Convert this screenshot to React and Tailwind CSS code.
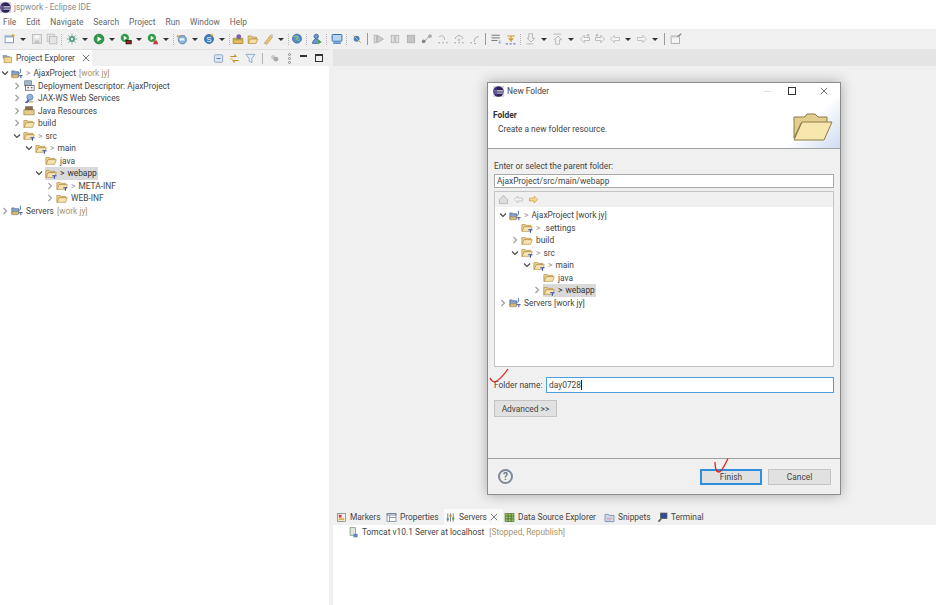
import React from "react";

const Eclipse = ({ className = "w-[11px] h-[11px]" }) => (
  <svg viewBox="0 0 16 16" className={className}>
    <rect x="0" y="0" width="16" height="16" fill="#d8d4e0" />
    <circle cx="8" cy="8" r="7.5" fill="#2c2255" />
    <path d="M1.5 6.6h13M1 8.6h14M1.7 10.6h12.6" stroke="#fff" strokeWidth="1" />
    <path d="M6 .8a7.5 7.5 0 0 0 0 14.4" fill="#473788" opacity=".6" />
  </svg>
);

const Chevron = ({ open }) => (
  <svg viewBox="0 0 8 8" className="w-[8px] h-[8px] shrink-0">
    {open ? (
      <path d="M1 2.5 4 5.5 7 2.5" fill="none" stroke="#444" strokeWidth="1.1" />
    ) : (
      <path d="M2.5 1 5.5 4 2.5 7" fill="none" stroke="#9a9a9a" strokeWidth="1.1" />
    )}
  </svg>
);

const Folder = ({ git }) => (
  <svg viewBox="0 0 14 12" className="w-[12px] h-[11px] shrink-0">
    <path d="M1 2.5h4l1 1h5.5v1.5H4L1.5 10.5H1z" fill="#e9cf94" stroke="#b48f45" strokeWidth=".8" />
    <path d="M3.6 5h9.6l-2 5.5H1.4z" fill="#f6e3b0" stroke="#b48f45" strokeWidth=".8" />
    {git && <path d="M8.5 8.5h5M11 8.5v3.5" stroke="#2f4fb5" strokeWidth="1.2" />}
  </svg>
);

const Project = () => (
  <svg viewBox="0 0 14 12" className="w-[12px] h-[11px] shrink-0">
    <path d="M1 3h3l1 1h4v6H1z" fill="#8aa3cc" stroke="#475f8e" strokeWidth=".8" />
    <path d="M1.500 7.500h7.500l-1 3.500H1z" fill="#d9bd78" stroke="#8c7238" strokeWidth=".5" />
    <path d="M11 .5v4c0 1.500-1.500 1.500-2 .8" stroke="#3a66b8" strokeWidth="1" fill="none" />
    <path d="M9.500 8.500h4M11.500 8.500v3" stroke="#2f4fb5" strokeWidth="1.100" />
  </svg>
);

const Descriptor = () => (
  <svg viewBox="0 0 14 12" className="w-[12px] h-[11px] shrink-0">
    <rect x="2" y="0.5" width="8" height="6" fill="#9fb8c9" stroke="#56707f" strokeWidth=".7" />
    <rect x="3" y="6" width="10" height="5.5" fill="#fff" stroke="#4a4a4a" strokeWidth=".8" />
    <path d="M5 8.5h2M9 8.5h2" stroke="#333" strokeWidth="1.2" />
  </svg>
);

const WebService = () => (
  <svg viewBox="0 0 14 12" className="w-[12px] h-[11px] shrink-0">
    <circle cx="8" cy="4.5" r="3.6" fill="#8fb2dc" stroke="#466f9f" strokeWidth=".7" />
    <path d="M2 11 6 7l2 2-3 2.5z" fill="#4b6fa8" />
    <path d="M8 9h4v2H7z" fill="#d0ba7a" />
  </svg>
);

const JavaRes = () => (
  <svg viewBox="0 0 14 12" className="w-[12px] h-[11px] shrink-0">
    <path d="M1 5h12v6H1z" fill="#e5cc8e" stroke="#9c7a38" strokeWidth=".8" />
    <path d="M3 1.5h8v3.5H3z" fill="#8d6e4f" stroke="#5a4632" strokeWidth=".7" />
  </svg>
);

const rowIcons = {
  project: <Project />,
  desc: <Descriptor />,
  ws: <WebService />,
  java: <JavaRes />,
  folder: <Folder />,
  git: <Folder git />,
};

function TreeRow({ depth, open, leaf, icon, label, prefix, tag, selected }) {
  const indent = ["w-0", "w-[12px]", "w-[24px]", "w-[34px]", "w-[45px]"][depth];
  return (
    <div className="flex items-center h-[12.5px] whitespace-nowrap">
      <span className={`${indent} shrink-0`} />
      <span className="w-[8px] ml-px mr-[2px] shrink-0">{leaf ? null : <Chevron open={open} />}</span>
      <span className={`flex items-center h-[12.5px] pr-px ${selected ? "bg-[#d9d9d9]" : ""}`}>
        {rowIcons[icon]}
        {prefix && <span className={`ml-[3px] ${selected ? "text-[#333]" : "text-[#999]"}`}>&gt;</span>}
        <span className={`ml-[3px] ${selected ? "text-[#333]" : "text-[#444]"}`}>{label}</span>
        {tag && <span className="ml-[3px] text-[#a8946b]">{tag}</span>}
      </span>
    </div>
  );
}

const mainTree = [
  { depth: 0, open: true, icon: "project", prefix: true, label: "AjaxProject", tag: "[work jy]" },
  { depth: 1, icon: "desc", label: "Deployment Descriptor: AjaxProject" },
  { depth: 1, icon: "ws", label: "JAX-WS Web Services" },
  { depth: 1, icon: "java", label: "Java Resources" },
  { depth: 1, icon: "folder", label: "build" },
  { depth: 1, open: true, icon: "git", prefix: true, label: "src" },
  { depth: 2, open: true, icon: "git", prefix: true, label: "main" },
  { depth: 3, leaf: true, icon: "folder", label: "java" },
  { depth: 3, open: true, icon: "git", prefix: true, label: "webapp", selected: true },
  { depth: 4, icon: "git", prefix: true, label: "META-INF" },
  { depth: 4, icon: "folder", label: "WEB-INF" },
  { depth: 0, icon: "project", label: "Servers", tag: "[work jy]" },
];

const dialogTree = [
  { depth: 0, open: true, icon: "project", prefix: true, label: "AjaxProject [work jy]" },
  { depth: 1, leaf: true, icon: "git", prefix: true, label: ".settings" },
  { depth: 1, icon: "folder", label: "build" },
  { depth: 1, open: true, icon: "git", prefix: true, label: "src" },
  { depth: 2, open: true, icon: "git", prefix: true, label: "main" },
  { depth: 3, leaf: true, icon: "folder", label: "java" },
  { depth: 3, icon: "git", prefix: true, label: "webapp", selected: true },
  { depth: 0, icon: "project", label: "Servers [work jy]" },
];

// toolbar glyphs, drawn on a 16x16 grid
const g = {
  newWin: <><rect x="1.5" y="4" width="11" height="9" fill="#fff" stroke="#5b7fa8" /><path d="M1.5 4h11v2h-11z" fill="#8fb0d6" /><path d="M12 1v5M9.5 3.5h5" stroke="#d8a62e" strokeWidth="1.3" /></>,
  save: <><rect x="2" y="2" width="12" height="12" fill="#e4e4e4" stroke="#b4b4b4" /><rect x="5" y="3" width="6" height="4" fill="#f8f8f8" /><rect x="5" y="10" width="6" height="4" fill="#c4c4c4" /></>,
  saveAll: <><rect x="1.5" y="1.5" width="10" height="10" fill="#e4e4e4" stroke="#bbb" /><rect x="4.5" y="4.5" width="10" height="10" fill="#e4e4e4" stroke="#b4b4b4" /></>,
  debug: <><circle cx="8" cy="8" r="4" fill="#5f9c86" /><path d="M8 1v14M1 8h14M3 3l10 10M13 3 3 13" stroke="#5f9c86" /><circle cx="8" cy="8" r="1.6" fill="#dcefe4" /></>,
  run: <><circle cx="8" cy="8" r="6.5" fill="#2f9a47" stroke="#1c7231" /><path d="M6 4.5v7l5.5-3.5z" fill="#fff" /></>,
  cover: <><circle cx="6.5" cy="6.5" r="5.5" fill="#2f9a47" /><path d="M5 3.5v6l4.5-3z" fill="#fff" /><rect x="8" y="10" width="7" height="4.5" fill="#9a1d1d" stroke="#111" /></>,
  ext: <><circle cx="6.5" cy="6.5" r="5.5" fill="#2f9a47" /><path d="M5 3.5v6l4.5-3z" fill="#fff" /><path d="M8 15l2-5h3l2 5z" fill="#c93a3a" /></>,
  server: <><path d="M1.5 3.5h10v2h-10z" fill="#e3c582" stroke="#a78a45" strokeWidth=".7" /><circle cx="8.5" cy="9" r="5.5" fill="#8db6df" stroke="#4b79a8" /><path d="M5 7h6v3H5z" fill="#e9f2fb" /></>,
  service: <><circle cx="8" cy="8" r="6" fill="#3f7fbf" stroke="#2a5d91" /><text x="8" y="11.5" fontSize="10" textAnchor="middle" fill="#fff" fontFamily="Liberation Sans">S</text><path d="M12 1v4M10 3h4" stroke="#d8a62e" strokeWidth="1.2" /></>,
  openType: <><path d="M1.5 7h13v7h-13z" fill="#e8bc5e" stroke="#a17e2f" /><circle cx="9" cy="5" r="3.2" fill="#7c5fa8" /><path d="M3 9h10" stroke="#7fa03b" strokeWidth="1.2" /></>,
  openFolder: <><path d="M1.5 4h5l1 1.5h5V8H4.5L2 13.5h-.5z" fill="#eacb86" stroke="#b48f45" /><path d="M4 8h10.5l-2.5 6H1.8z" fill="#f4dfa6" stroke="#b48f45" /></>,
  pen: <><path d="M3 14 11 3l3 2.5L6.5 15z" fill="#e8c46b" stroke="#a78a45" strokeWidth=".7" /><path d="M11 3l3 2.5 1-3-2-1.5z" fill="#c9c9c9" /><path d="M3 14l3.5 1L3 11z" fill="#bfbfbf" /></>,
  globe: <><circle cx="8" cy="7.5" r="6" fill="#4f8fca" stroke="#2e6496" /><path d="M4 5.5c2-2 4-1 5 0s-1 3-3 2.5M9 10l3-1" stroke="#9ccb6e" strokeWidth="1.5" fill="none" /></>,
  person: <><circle cx="7" cy="4.5" r="3" fill="#6f94c6" stroke="#3e6597" /><path d="M2 14c0-4 2.5-6 5-6s4 1.500 4.500 3L9 14z" fill="#6f94c6" stroke="#3e6597" /><path d="M9.500 9v6l5-3z" fill="#43a04f" /></>,
  monitor: <><rect x="1.500" y="2" width="13" height="9" rx="1" fill="#b9d4ee" stroke="#2f6fb0" strokeWidth="1.300" /><path d="M3 12.500h10v2H3z" fill="#3f7fbf" /></>,
  skip: <><circle cx="7.500" cy="7.500" r="4" fill="#4a86bd" /><path d="M3 3l10 10" stroke="#caa55b" strokeWidth="1.300" /></>,
  resume: <><rect x="1.500" y="3" width="3" height="10" fill="#ddd" stroke="#aaa" /><path d="M6 3v10l8-5z" fill="#ccc" stroke="#aaa" /></>,
  pause: <><rect x="3" y="3" width="4" height="10" fill="#e2e2e2" stroke="#aaa" /><rect x="9" y="3" width="4" height="10" fill="#e2e2e2" stroke="#aaa" /></>,
  stop: <><rect x="3" y="3" width="10" height="10" fill="#c4c4c4" stroke="#aaa" /></>,
  disconnect: <><path d="M3 13 12 3" stroke="#888" /><circle cx="3.500" cy="11" r="2.500" fill="#888" /><circle cx="12" cy="4" r="2.500" fill="#aaa" /></>,
  stepInto: <><path d="M3 5c4-3 7-1 7 4" stroke="#aaa" strokeWidth="1.300" fill="none" /><path d="M2 13h2M7 13h2M12 13h2" stroke="#999" strokeWidth="1.300" /></>,
  stepOver: <><path d="M3 8c1-6 9-6 10 0" stroke="#aaa" strokeWidth="1.300" fill="none" /><circle cx="8" cy="9" r="2" fill="#ccc" /><path d="M2 13h2M7 13h2M12 13h2" stroke="#999" strokeWidth="1.300" /></>,
  stepRet: <><path d="M7 12c0-5 2-7 6-7" stroke="#aaa" strokeWidth="1.300" fill="none" /><path d="M2 13h2M7 14h2" stroke="#999" strokeWidth="1.300" /></>,
  lines: <><path d="M2 3h11M2 6.500h11M2 10h8" stroke="#777" strokeWidth="1.300" /><path d="M13 9v5M11 12l2 2 2-2" stroke="#8aa8c8" fill="none" /></>,
  ptr: <><path d="M3 4h10M8 4v8M5 7l3 3 3-3" stroke="#c99a2e" strokeWidth="1.600" fill="none" /><path d="M1 14.500h3M6 14.500h3M11 14.500h3" stroke="#3f62b0" strokeWidth="1.200" /></>,
  nextAnn: <><path d="M5 1h5v6h3l-5 5-5-5h2z" fill="#f0f0f0" stroke="#aaa" /><path d="M2 14.500h9" stroke="#aaa" /></>,
  prevAnn: <><path d="M5 15h5V9h3L8 4 3 9h2z" fill="#f0f0f0" stroke="#aaa" /><path d="M2 1.500h10" stroke="#aaa" /></>,
  lastEdit: <><path d="M7 3 2 8l5 5v-3h7V6H7z" fill="#f4f4f4" stroke="#aaa" /><path d="M12 1v4M10 3h4" stroke="#aaa" /></>,
  nextEdit: <><path d="M9 3l5 5-5 5v-3H2V6h7z" fill="#f4f4f4" stroke="#aaa" /><path d="M4 1v4M2 3h4" stroke="#aaa" /></>,
  back: <><path d="M7 3 2 8l5 5v-3h7V6H7z" fill="#f4f4f4" stroke="#b4b4b4" /></>,
  forward: <><path d="M9 3l5 5-5 5v-3H2V6h7z" fill="#f4f4f4" stroke="#b4b4b4" /></>,
  pin: <><rect x="1.500" y="4" width="11" height="10" fill="#f4f4f4" stroke="#999" /><path d="M1.500 4h11v2h-11z" fill="#ccc" /><path d="M10 5l5-4" stroke="#888" strokeWidth="1.500" /></>,
};

// "|v" dropdown arrow, "|" dotted separator, "|a" dotted separator after an arrow, "||" solid separator
const toolbar = [
  "newWin", "|v", "save", "saveAll", "|", "debug", "|v", "run", "|v", "cover", "|v", "ext", "|v", "|a",
  "server", "|v", "service", "|v", "|a", "openType", "openFolder", "pen", "|v", "|a", "globe", "|", "person", "|",
  "monitor", "|", "skip", "||", "resume", "pause", "stop", "disconnect", "stepInto", "stepOver", "stepRet", "||n",
  "lines", "ptr", "|", "nextAnn", "|v", "prevAnn", "|v", "lastEdit", "nextEdit", "back", "|v", "forward", "|v", "||", "pin",
];
const debugGroup = ["resume", "pause", "stop", "disconnect", "stepInto", "stepOver", "stepRet"];

function ToolItem({ kind }) {
  if (kind === "|v") {
    return (
      <span className="w-[12px] flex justify-center shrink-0">
        <span className="w-0 h-0 border-x-[3px] border-x-transparent border-t-[3px] border-t-[#333]" />
      </span>
    );
  }
  if (kind === "|" || kind === "|a") {
    return (
      <span className={`${kind === "|" ? "w-[5px]" : "w-[2px]"} flex justify-center shrink-0`}>
        <span className="h-[11px] border-l border-dotted border-[#b5b5b5]" />
      </span>
    );
  }
  if (kind === "||" || kind === "||n") {
    return (
      <span className={`${kind === "||" ? "w-[7px]" : "w-[5px]"} flex justify-center shrink-0`}>
        <span className="w-px h-[12px] bg-[#9a9a9a]" />
      </span>
    );
  }
  return (
    <span className={`${debugGroup.includes(kind) ? "w-[16px]" : "w-[15px]"} flex justify-center shrink-0`}>
      <svg viewBox="0 0 16 16" className="w-[12px] h-[12px]">{g[kind]}</svg>
    </span>
  );
}

const Small = ({ children }) => (
  <svg viewBox="0 0 16 16" className="w-[11px] h-[11px] shrink-0">{children}</svg>
);

const Close = () => (
  <svg viewBox="0 0 10 10" className="w-[8px] h-[8px] shrink-0">
    <path d="M1 1l8 8M9 1l-8 8" stroke="#555" strokeWidth="1" />
  </svg>
);

const bottomTabs = [
  { label: "Markers", w: "w-[50px]", icon: <><rect x="2" y="2" width="12" height="12" fill="#f4f4f4" stroke="#777" /><rect x="4" y="4" width="4" height="4" fill="#d33" /><rect x="4" y="9" width="8" height="3" fill="#e2b23a" /></> },
  { label: "Properties", w: "w-[59px]", icon: <><rect x="1.500" y="2.500" width="13" height="11" fill="#fff" stroke="#5d7290" /><path d="M1.500 2.500h13v2h-13zM5 4.500v9M5 8h9" stroke="#5d7290" fill="none" /></> },
  { label: "Servers", w: "w-[59px]", active: true, icon: <><path d="M4 2v12M8 2v12M12 2v12" stroke="#555" /><rect x="2.500" y="9" width="3" height="3" fill="#4a86bd" /><rect x="6.500" y="4" width="3" height="3" fill="#c9882e" /><rect x="10.500" y="8" width="3" height="3" fill="#4f9a4f" /></> },
  { label: "Data Source Explorer", w: "w-[100px]", icon: <><rect x="1.500" y="2" width="13" height="12" fill="#9bc06a" stroke="#4f7a2f" /><path d="M1.500 6h13M1.500 10h13M6 2v12M10.500 2v12" stroke="#3f6623" /></> },
  { label: "Snippets", w: "w-[53px]", icon: <><path d="M1.500 3.500h5l1 1.500h7v9h-13z" fill="#cfdcee" stroke="#5d7ba8" /><path d="M4 9h8M4 11.500h6" stroke="#d88" /></> },
  { label: "Terminal", w: "w-[55px]", icon: <><rect x="5" y="1.500" width="9.500" height="8" fill="#2b4f8f" stroke="#555" /><path d="M2 14l4-4" stroke="#666" strokeWidth="2.500" /></> },
];

const viewIcons = [
  <><rect x="2" y="2.500" width="12" height="11" rx="1.500" fill="#dbe6f2" stroke="#6f8fb3" /><path d="M5 8h6" stroke="#4f75a3" strokeWidth="1.300" /></>,
  <><path d="M2 5h8l-2-3M14 11H6l2 3" stroke="#c58d2a" strokeWidth="1.600" fill="none" /><rect x="1.500" y="7" width="4" height="3" fill="#e7cf96" /></>,
  <><path d="M1.500 2h13L10 8v6l-4-2V8z" fill="#e5eef7" stroke="#6f8fb3" /></>,
];

export default function App() {
  return (
    <div className="relative w-[936px] h-[605px] overflow-hidden bg-white text-[8.4px] leading-none text-[#444] font-['Roboto','Liberation_Sans',sans-serif] flex flex-col">
      {/* title + menu */}
      <div className="h-[14px] flex items-center gap-[3px] shrink-0">
        <Eclipse />
        <span className="text-[#8a8a8a] pt-[1px]">jspwork - Eclipse IDE</span>
      </div>
      <div className="h-[15px] flex items-center gap-[10px] pl-[3px] pt-[2px] text-[#666] shrink-0">
        {["File", "Edit", "Navigate", "Search", "Project", "Run", "Window", "Help"].map((m) => (
          <span key={m}>{m}</span>
        ))}
      </div>

      {/* main toolbar */}
      <div className="h-[20px] bg-[#f0f0f0] flex items-center pl-[2px] shrink-0">
        {toolbar.map((t, i) => (
          <ToolItem key={i} kind={t} />
        ))}
      </div>

      <div className="flex-1 flex min-h-0 bg-[#f0f0f0]">
        {/* project explorer */}
        <div className="w-[329px] flex flex-col border-t border-[#e0e0e0] shrink-0">
          <div className="h-[16px] flex items-center shrink-0 bg-[#e4e4e4]">
            <div className="h-full w-[92px] bg-white flex items-center pl-[2px] gap-[3px]">
              <Small><path d="M1 3h6l1 1.500h3V8H1z" fill="#8aa3cc" /><path d="M3 6h11v8H3z" fill="#efd596" stroke="#b48f45" /></Small>
              <span className="text-[#444] whitespace-nowrap">Project Explorer</span>
              <span className="ml-[4px]"><Close /></span>
            </div>
            <div className="bg-[#f0f0f0] flex-1 h-full flex items-center pl-[121px] gap-[5px]">
              {viewIcons.map((v, i) => <Small key={i}>{v}</Small>)}
              <span className="w-px h-[11px] bg-[#b5b5b5] mx-[1px]" />
              <Small><circle cx="6" cy="6" r="3" fill="#c9c9c9" /><circle cx="10" cy="9" r="3.500" fill="#aaa" /></Small>
              <span className="w-[9px] flex flex-col items-center gap-px">
                <span className="w-[3px] h-[3px] rounded-full border border-[#888]" />
                <span className="w-[3px] h-[3px] rounded-full border border-[#888]" />
                <span className="w-[3px] h-[3px] rounded-full border border-[#888]" />
              </span>
              <span className="ml-px w-[7px] h-[2px] bg-[#333] mb-[4px]" />
              <span className="ml-[3px] w-[8px] h-[8px] border border-[#333] border-t-2" />
            </div>
          </div>
          <div className="flex-1 bg-white pt-[1px]">
            {mainTree.map((r) => (
              <TreeRow key={r.label} {...r} />
            ))}
          </div>
        </div>

        {/* editor + bottom panel */}
        <div className="flex-1 flex flex-col ml-[4px] min-w-0">
          <div className="h-[17px] bg-[#e4e4e4] shrink-0" />
          <div className="flex-1" />
          <div className="h-[17px] flex items-center shrink-0 pl-[2px] pt-[1px]">
            {bottomTabs.map((t) => (
              <div key={t.label} className={`${t.w} h-full flex items-center gap-[3px] pl-[1px] shrink-0 whitespace-nowrap ${t.active ? "bg-[#fafafa]" : ""}`}>
                <Small>{t.icon}</Small>
                <span>{t.label}</span>
                {t.active && <Close />}
              </div>
            ))}
          </div>
          <div className="h-[80px] bg-white shrink-0 flex items-start pl-[15px] pt-[2px] gap-[3px] whitespace-nowrap">
            <Small><rect x="3" y="1" width="8" height="11" fill="#dfe6df" stroke="#6d8a6d" /><rect x="8" y="10" width="6" height="5" fill="#5f88b8" /></Small>
            <span className="pt-[1px]">Tomcat v10.1 Server at localhost</span>
            <span className="ml-[2px] pt-[1px] text-[#a8946b]">[Stopped, Republish]</span>
          </div>
        </div>
      </div>

      {/* New Folder dialog */}
      <div className="absolute left-[487px] top-[82px] w-[354px] h-[413px] bg-[#f0f0f0] border border-[#8c8c8c] shadow-[0_0_12px_rgba(0,0,0,0.3)] flex flex-col">
        <div className="h-[66px] bg-white border-b border-[#a0a0a0] relative shrink-0 overflow-hidden">
          <div className="absolute right-0 bottom-0 w-[55px] h-[50px] bg-[linear-gradient(135deg,#ffffff_45%,#cfdcf0_100%)]" />
          <div className="relative h-[17px] flex items-center pl-[5px] gap-[3px]">
            <Eclipse />
            <span className="text-[#444]">New Folder</span>
            <span className="absolute left-[276px] top-[8px] w-[7px] h-px bg-[#ddd]" />
            <span className="absolute left-[300px] top-[4px] w-[8px] h-[8px] border border-[#333]" />
            <span className="absolute left-[332px] top-[4px]"><Close /></span>
          </div>
          <div className="relative pl-[5px] pt-[11px] font-bold text-[#333]">Folder</div>
          <div className="relative pl-[10px] pt-[6px] text-[#444]">Create a new folder resource.</div>
          <svg viewBox="0 0 40 28" className="absolute left-[305px] top-[30px] w-[40px] h-[28px]">
            <path d="M1 4h11l2-3h8l3 3h9v6H8L1 25z" fill="#e3cf8d" stroke="#8e7a48" />
            <path d="M9 9h30l-8 18H1z" fill="#f7e7ad" stroke="#8e7a48" />
          </svg>
        </div>

        <div className="flex-1 px-[6px] pt-[13px] flex flex-col min-h-0">
          <div className="h-[9px] flex items-center">Enter or select the parent folder:</div>
          <div className="mt-[3px] h-[14px] bg-white border border-[#a8a8a8] flex items-center px-[2px]">AjaxProject/src/main/webapp</div>
          <div className="mt-[3px] h-[176px] border border-[#c4c4c4] bg-white flex flex-col shrink-0">
            <div className="h-[15px] bg-[#f0f0f0] flex items-center pl-[3px] gap-[4px] shrink-0">
              <Small><path d="M2 8 8 2l6 6v6H2z" fill="#ddd" stroke="#aaa" /></Small>
              <Small><path d="M7 3 2 8l5 5v-3h7V6H7z" fill="#f4f4f4" stroke="#b4b4b4" /></Small>
              <Small><path d="M9 3l5 5-5 5v-3H2V6h7z" fill="#f4dc9c" stroke="#c99a2e" /></Small>
            </div>
            <div className="pt-[2px] pl-[3px]">
              {dialogTree.map((r) => (
                <TreeRow key={r.label} {...r} />
              ))}
            </div>
          </div>
          <div className="mt-[10px] flex items-center h-[16px]">
            <span className="w-[52px] shrink-0 whitespace-nowrap pt-[1px]">Folder name:</span>
            <div className="flex-1 h-full bg-white border border-[#4a9fe0] flex items-center px-[2px]">
              day0728<span className="w-px h-[10px] bg-[#222]" />
            </div>
          </div>
          <button className="mt-[7px] w-[63px] h-[17px] bg-[#e1e1e1] border border-[#c4c4c4] text-[#444] text-[8.4px] pt-[1px]">Advanced &gt;&gt;</button>
        </div>

        <div className="h-[36px] border-t border-[#a0a0a0] flex items-center px-[10px] shrink-0">
          <span className="w-[15px] h-[15px] rounded-full border-2 border-[#7d8a97] flex items-center justify-center text-[#6d7a87] font-bold text-[10px]">?</span>
          <button className="ml-auto w-[62px] h-[16px] bg-[#e1e1e1] border-2 border-[#2f8fdc] text-[#444] text-[8.4px] pt-[1px]">Finish</button>
          <button className="ml-[6px] mr-[-1px] w-[63px] h-[16px] bg-[#e1e1e1] border border-[#c4c4c4] text-[#444] text-[8.4px] pt-[1px]">Cancel</button>
        </div>
      </div>

      {/* red check marks */}
      <svg viewBox="0 0 24 18" className="absolute left-[488px] top-[367px] w-[24px] h-[18px]">
        <path d="M2 11Q4 15 7 15Q13 12 20 2" fill="none" stroke="#e0201c" strokeWidth="1.300" />
      </svg>
      <svg viewBox="0 0 20 16" className="absolute left-[713px] top-[458px] w-[20px] h-[16px]">
        <path d="M2 4C2 10 3 14 6 14S12 6 15 .5" fill="none" stroke="#e0201c" strokeWidth="1.300" />
      </svg>
    </div>
  );
}
